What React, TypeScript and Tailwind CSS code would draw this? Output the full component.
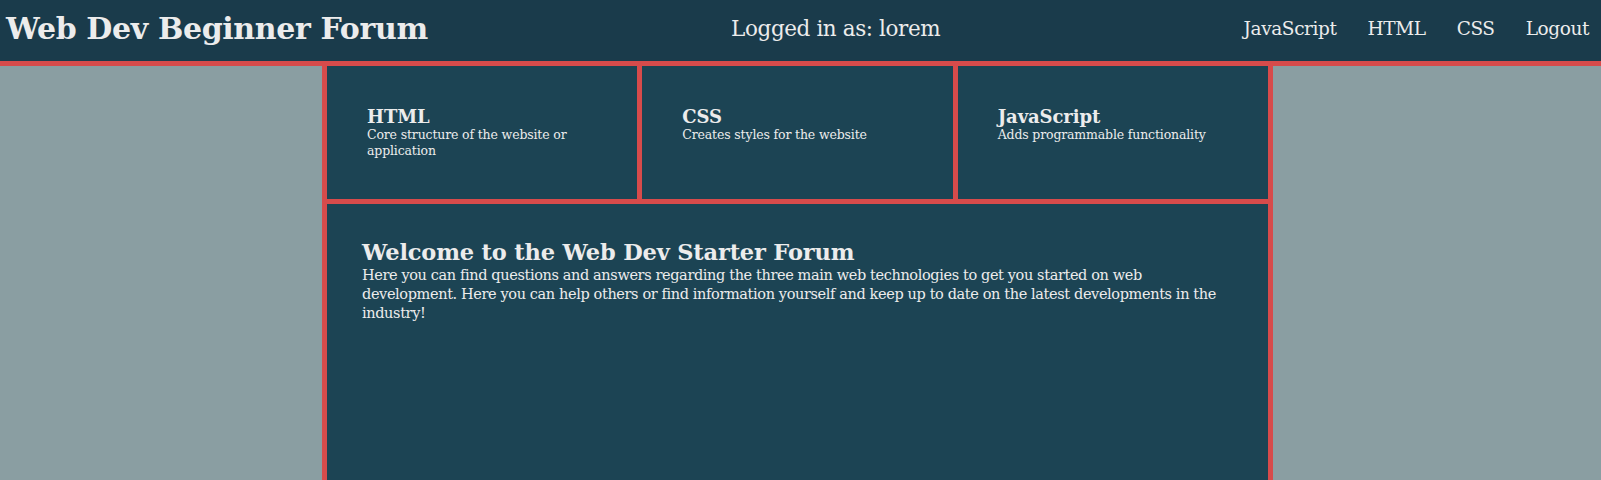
import React from 'react';

const navLinks = ['JavaScript', 'HTML', 'CSS', 'Logout'];

const topics = [
  { title: 'HTML', text: 'Core structure of the website or application' },
  { title: 'CSS', text: 'Creates styles for the website' },
  { title: 'JavaScript', text: 'Adds programmable functionality' },
];

function App() {
  return (
    <div className="flex min-h-screen flex-col bg-[#8a9ea2] font-['DejaVu_Serif',serif] text-[#ececec]">
      <header className="flex h-[66px] items-center justify-between border-b-[5px] border-[#d74b4b] bg-[#1a3b4b] pb-[4px] pl-[6px] pr-[12px]">
        <h1 className="text-[30px] font-bold leading-[36px] tracking-[-0.35px]">Web Dev Beginner Forum</h1>
        <h2 className="text-[21.5px] leading-[27px] tracking-[-0.4px]">Logged in as: lorem</h2>
        <nav className="flex gap-[31px] text-[18.5px] leading-[22px] tracking-[-0.4px]">
          {navLinks.map((link) => (
            <a key={link} href="#" className="hover:underline">
              {link}
            </a>
          ))}
        </nav>
      </header>

      <div className="grid flex-1 grid-cols-[322px_951px_1fr]">
        <div />
        <main className="flex flex-col gap-[5px] border-x-[5px] border-[#d74b4b] bg-[#d74b4b]">
          <section className="grid grid-cols-3 gap-[5px]">
            {topics.map((topic) => (
              <div key={topic.title} className="bg-[#1c4454] p-[40px]">
                <h3 className="text-[18px] font-bold leading-[21px] tracking-[-0.1px]">{topic.title}</h3>
                <p className="text-[12.5px] leading-[16px] tracking-[-0.15px]">{topic.text}</p>
              </div>
            ))}
          </section>
          <section className="flex-1 bg-[#1c4454] p-[35px]">
            <h2 className="text-[22.5px] font-bold leading-[27px] tracking-[-0.17px]">
              Welcome to the Web Dev Starter Forum
            </h2>
            <p className="text-[14.5px] leading-[19px] tracking-[-0.38px]">
              Here you can find questions and answers regarding the three main web technologies to get you
              started on web development. Here you can help others or find information yourself and keep up to
              date on the latest developments in the industry!
            </p>
          </section>
        </main>
        <div />
      </div>
    </div>
  );
}

export default App;
